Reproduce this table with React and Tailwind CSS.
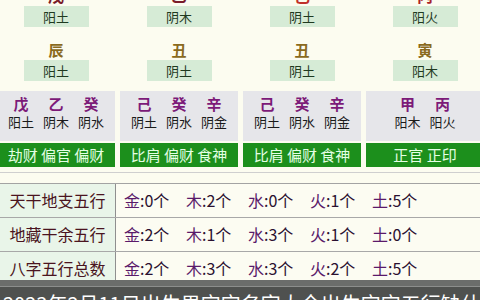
import React from "react";

const cols = [
    {
        gan: "戊", ganColor: "text-[#7a1c2a]", ganTag: "阳土",
        zhi: "辰", zhiTag: "阳土",
        hidden: [["戊", "阳土"], ["乙", "阴木"], ["癸", "阴水"]],
        gods: "劫财 偏官 偏财",
    },
    {
        gan: "乙", ganColor: "text-[#7a1c2a]", ganTag: "阴木",
        zhi: "丑", zhiTag: "阴土",
        hidden: [["己", "阴土"], ["癸", "阴水"], ["辛", "阴金"]],
        gods: "比肩 偏财 食神",
    },
    {
        gan: "己", ganColor: "text-[#c0302a]", ganTag: "阴土",
        zhi: "丑", zhiTag: "阴土",
        hidden: [["己", "阴土"], ["癸", "阴水"], ["辛", "阴金"]],
        gods: "比肩 偏财 食神",
    },
    {
        gan: "丙", ganColor: "text-[#a8242a]", ganTag: "阳火",
        zhi: "寅", zhiTag: "阳木",
        hidden: [["甲", "阳木"], ["丙", "阳火"]],
        gods: "正官 正印",
    },
];

const rows = [
    { name: "天干地支五行", vals: ["金:0个", "木:2个", "水:0个", "火:1个", "土:5个"] },
    { name: "地藏干余五行", vals: ["金:2个", "木:1个", "水:3个", "火:1个", "土:0个"] },
    { name: "八字五行总数", vals: ["金:2个", "木:3个", "水:3个", "火:2个", "土:5个"] },
];

const font = { fontFamily: '"Noto Sans CJK SC", "Noto Sans", sans-serif' };

function Pillar({ col }) {
    return (
        <div className="w-[118px] shrink-0 flex flex-col">
            {/* 天干 + 地支 */}
            <div className="flex flex-col items-center">
                <div className={`h-[18px] -mt-[14px] text-[16px] leading-[18px] font-bold ${col.ganColor}`}>{col.gan}</div>
                <div className="mt-[2px] w-[65px] h-[21px] bg-[#d6ebd6] text-[13px] leading-[21px] text-center text-[#1f3a1f]">{col.ganTag}</div>
                <div className="mt-[14px] h-[18px] text-[15px] leading-[18px] font-bold text-[#8a6a1e]">{col.zhi}</div>
                <div className="mt-[1px] w-[65px] h-[21px] bg-[#d6ebd6] text-[13px] leading-[21px] text-center text-[#1f3a1f]">{col.zhiTag}</div>
            </div>

            {/* 藏干 */}
            <div className="mt-[10px] h-[50px] bg-[#e6e6ea] flex justify-center gap-[11px] pt-[4px]">
                {col.hidden.map(([c, t], i) => (
                    <div key={i} className="flex flex-col items-center w-[24px]">
                        <span className="text-[15px] leading-[18px] font-bold text-[#7c1a78]">{c}</span>
                        <span className="text-[13px] leading-[18px] text-[#1a1a1a] whitespace-nowrap">{t}</span>
                    </div>
                ))}
            </div>

            {/* 十神 */}
            <div className="mt-[2px] h-[24px] bg-[#1c8f1c] text-[#e4ffe4] text-[15px] leading-[24px] text-center whitespace-pre">
                {col.gods}
            </div>
        </div>
    );
}

export default function App() {
    return (
        <div className="relative w-[480px] h-[300px] overflow-hidden bg-[#fcfcf0]" style={font}>
            <div className="flex gap-[5px] -ml-[3px]">
                {cols.map((c, i) => (
                    <Pillar key={i} col={c} />
                ))}
            </div>

            {/* 五行统计 */}
            <div className="mt-[5px] border-t border-[#cfcfcf] h-[11px]" />
            <div className="border-t border-[#a3a3a3]">
                {rows.map((r, i) => (
                    <div key={i} className="flex h-[34px] border-b border-[#a8a8a8]">
                        <div className="w-[116px] shrink-0 bg-[#e9f5e9] border-r border-[#8f8f8f] text-center text-[16px] leading-[32px] text-[#4a1420]">
                            {r.name}
                        </div>
                        <div className="flex-1 bg-[#fcfcf2] flex pl-[8px] text-[16px] leading-[32px] text-[#2a1030]">
                            {r.vals.map((v, j) => (
                                <span key={j} className="w-[62px] shrink-0 whitespace-nowrap">
                                    <span className="text-[#5a1a6a]">{v[0]}</span>{v.slice(1)}
                                </span>
                            ))}
                        </div>
                    </div>
                ))}
            </div>

            {/* 底部标题栏 */}
            <div className="absolute left-0 right-0 top-[280px] h-[20px]">
                <div className="h-[6px] bg-[#6b6d6b]" />
                <div className="h-[1px] bg-[#8c8e8c]" />
                <div className="h-[13px] bg-[#4f514f] overflow-hidden">
                    <div className="pl-[3px] pt-[5px] text-[20px] leading-[24px] text-white whitespace-nowrap">
                        2023年2月11日出生男宝宝名字大全出生宝宝五行缺什么
                    </div>
                </div>
            </div>
        </div>
    );
}
